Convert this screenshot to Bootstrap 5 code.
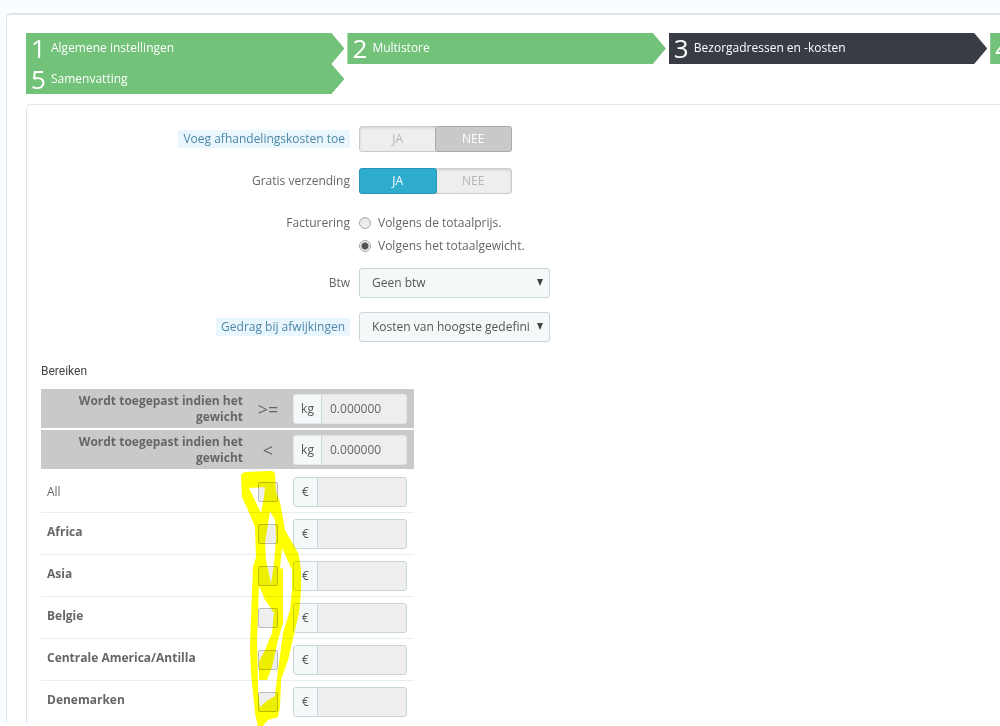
<!DOCTYPE html>
<html lang="nl">
<head>
<meta charset="utf-8">
<meta name="viewport" content="width=device-width, initial-scale=1">
<title>Bezorgadressen en -kosten</title>
<link href="https://cdn.jsdelivr.net/npm/bootstrap@5.3.0/dist/css/bootstrap.min.css" rel="stylesheet">
<style>
body { background: #fff; color: #666; font: 12px/16px "Open Sans", sans-serif; min-height: 100vh; }
.page-area { background: #fafdff; padding: 13px 0 0 6px; }
.outer-panel { background: #fff; border: solid #dfe4ea; border-width: 2px 0 0 1px; border-top-left-radius: 5px; padding: 18px 0 0 19px; }
.inner-panel { border: solid #e0e3e8; border-width: 1px 0 0 1px; border-top-left-radius: 5px; padding: 21px 0 0 14px; margin-top: 10px; }

.steps { display: grid; grid-template-columns: repeat(4, 33%); grid-template-rows: 31px 30px; overflow: hidden; }
.step { color: #fff; background: #72c279; margin-right: 3px; padding: 0 5px; clip-path: polygon(0 0, calc(100% - 13px) 0, 100% 50%, calc(100% - 13px) 100%, 0 100%); text-decoration: none; line-height: 30px; }
.step:hover { color: #fff; }
.step.current { background: #3a3c45; }
.step-no { font-size: 26px; width: 20px; }

.form-line { display: grid; grid-template-columns: 309px 1fr; column-gap: 9px; }
.snug { margin-bottom: 14px; }
.line-label { justify-self: end; line-height: 18px; }
.hinted { background: #eaf6fd; color: #4d87a8; padding: 0 5px; }
.toggle-pair { width: 153px; height: 26px; background: #eee; border: 1px solid #ccc; border-radius: 3px; box-shadow: inset 0 1px 3px rgba(0,0,0,.12); }
.toggle-pair label { flex: 1; text-align: center; line-height: 24px; color: #b5b5b5; margin: -1px; border: 1px solid transparent; border-radius: 3px; }
.toggle-pair .btn-check:checked + .on { background: #2eacce; border-color: #2596b5; color: #fff; }
.toggle-pair .btn-check:checked + .off { background: #c9c9c9; border-color: #aaa; color: #fff; }
.radio-stack { display: grid; row-gap: 7px; padding-top: 1px; }
.radio-line { display: flex; align-items: center; column-gap: 7px; }
.dot { appearance: none; width: 12px; height: 12px; border: 1px solid #aaa; border-radius: 50%; background: linear-gradient(#e4e4e4, #f2f2f2); margin: 0; }
.dot:checked { background: radial-gradient(circle, #555 0 3px, #eee 4px); }
.picker { width: 191px; height: 30px; padding: 0 20px 0 12px; font-size: 12px; line-height: 28px; color: #555; border: 1px solid #c7d6db; border-radius: 3px; background-color: #f5f8f9;
  background-image: url("data:image/svg+xml,%3Csvg xmlns='http://www.w3.org/2000/svg' viewBox='0 0 6 7'%3E%3Cpath d='M0 0h6L3 7z' fill='%23444'/%3E%3C/svg%3E"); background-size: 6px 7px; background-position: right 6px top 10px; text-overflow: clip; }

.ranges { position: relative; padding-top: 20px; }
.range-title { font: 12px/19px Roboto, sans-serif; color: #444; }
.range-table { width: 373px; table-layout: fixed; border-collapse: separate; border-spacing: 0; margin-bottom: -3px; }
.range-table td, .range-table th { height: 42px; padding: 0 6px; vertical-align: middle; border-bottom: 1px solid #eaeded; }
.range-table thead th { height: 41px; background: #c9c9c9; border-bottom: 2px solid #fff; }
.range-table tbody tr:last-child td { border-bottom-color: transparent; }
.range-table .zone { font-weight: 700; padding-bottom: 4px; }
.range-table .sign { font-size: 18px; font-weight: 400; }
.amount { width: 114px; height: 30px; border: 1px solid #c7d6db; border-radius: 3px; overflow: hidden; background: #eee; }
.amount label { background: #f5f8f9; border-right: 1px solid #c7d6db; color: #555; width: 24px; line-height: 28px; font-weight: 400; }
.amount .unit { width: 28px; }
.amount input { min-width: 0; border: 0; background: #eee; color: #666; padding: 0 8px; }
thead .amount { border-color: #e3e6e8; }
.tick { appearance: none; display: block; width: 20px; height: 20px; margin: 0 auto; border: 1px solid #bbb; border-radius: 2px; background: #eee; }
.marker { position: absolute; left: 199px; top: 127px; mix-blend-mode: multiply; pointer-events: none; }
</style>
</head>
<body>
<main class="page-area">
  <div class="outer-panel">
    <nav class="steps" aria-label="Stappen">
      <a class="step d-flex" href="#"><span class="step-no">1</span><span>Algemene instellingen</span></a>
      <a class="step d-flex" href="#"><span class="step-no">2</span><span>Multistore</span></a>
      <a class="step current d-flex" href="#" aria-current="step"><span class="step-no">3</span><span>Bezorgadressen en -kosten</span></a>
      <a class="step d-flex" href="#"><span class="step-no">4</span></a>
      <a class="step d-flex" href="#"><span class="step-no">5</span><span>Samenvatting</span></a>
    </nav>
    <form class="inner-panel">
      <div class="form-line align-items-center mb-3">
        <span class="line-label hinted" id="l1">Voeg afhandelingskosten toe</span>
        <div class="toggle-pair d-flex" role="radiogroup" aria-labelledby="l1">
          <input class="btn-check" type="radio" name="handling" id="h1"><label class="on" for="h1">JA</label>
          <input class="btn-check" type="radio" name="handling" id="h0" checked><label class="off" for="h0">NEE</label>
        </div>
      </div>
      <div class="form-line align-items-center mb-3">
        <span class="line-label" id="l2">Gratis verzending</span>
        <div class="toggle-pair d-flex" role="radiogroup" aria-labelledby="l2">
          <input class="btn-check" type="radio" name="free" id="f1" checked><label class="on" for="f1">JA</label>
          <input class="btn-check" type="radio" name="free" id="f0"><label class="off" for="f0">NEE</label>
        </div>
      </div>
      <div class="form-line snug pt-1">
        <span class="line-label" id="l3">Facturering</span>
        <div class="radio-stack" role="radiogroup" aria-labelledby="l3">
          <div class="radio-line"><input class="dot" type="radio" name="bill" id="b1"><label for="b1">Volgens de totaalprijs.</label></div>
          <div class="radio-line"><input class="dot" type="radio" name="bill" id="b2" checked><label for="b2">Volgens het totaalgewicht.</label></div>
        </div>
      </div>
      <div class="form-line snug align-items-center">
        <label class="line-label" for="tax">Btw</label>
        <select class="form-select picker" id="tax"><option>Geen btw</option></select>
      </div>
      <div class="form-line align-items-center">
        <label class="line-label hinted" for="oor">Gedrag bij afwijkingen</label>
        <select class="form-select picker" id="oor"><option>Kosten van hoogste gedefinieerde bereik</option></select>
      </div>
      <div class="ranges">
        <h2 class="range-title mb-2">Bereiken</h2>
        <table class="range-table">
          <colgroup><col style="width:208px"><col style="width:38px"><col></colgroup>
          <thead>
            <tr><th class="text-end">Wordt toegepast indien het gewicht</th><th class="sign text-center px-0">&gt;=</th><th><div class="amount d-flex"><label class="unit text-center flex-shrink-0" for="w1">kg</label><input id="w1" type="text" value="0.000000"></div></th></tr>
            <tr><th class="text-end">Wordt toegepast indien het gewicht</th><th class="sign text-center px-0">&lt;</th><th><div class="amount d-flex"><label class="unit text-center flex-shrink-0" for="w2">kg</label><input id="w2" type="text" value="0.000000"></div></th></tr>
          </thead>
          <tbody>
            <tr><td><label for="c0">All</label></td><td><input class="tick" type="checkbox" id="c0"></td><td><div class="amount d-flex"><label class="text-center flex-shrink-0" for="p0">€</label><input id="p0" type="text" disabled></div></td></tr>
            <tr><td class="zone"><label for="c1">Africa</label></td><td><input class="tick" type="checkbox" id="c1"></td><td><div class="amount d-flex"><label class="text-center flex-shrink-0" for="p1">€</label><input id="p1" type="text" disabled></div></td></tr>
            <tr><td class="zone"><label for="c2">Asia</label></td><td><input class="tick" type="checkbox" id="c2"></td><td><div class="amount d-flex"><label class="text-center flex-shrink-0" for="p2">€</label><input id="p2" type="text" disabled></div></td></tr>
            <tr><td class="zone"><label for="c3">Belgie</label></td><td><input class="tick" type="checkbox" id="c3"></td><td><div class="amount d-flex"><label class="text-center flex-shrink-0" for="p3">€</label><input id="p3" type="text" disabled></div></td></tr>
            <tr><td class="zone"><label for="c4">Centrale America/Antilla</label></td><td><input class="tick" type="checkbox" id="c4"></td><td><div class="amount d-flex"><label class="text-center flex-shrink-0" for="p4">€</label><input id="p4" type="text" disabled></div></td></tr>
            <tr><td class="zone"><label for="c5">Denemarken</label></td><td><input class="tick" type="checkbox" id="c5"></td><td><div class="amount d-flex"><label class="text-center flex-shrink-0" for="p5">€</label><input id="p5" type="text" disabled></div></td></tr>
          </tbody>
        </table>
        <!-- highlighter stroke over the tick boxes -->
        <svg class="marker" width="64" height="257" viewBox="240 469 64 257" aria-hidden="true">
          <path fill="#ff0" fill-rule="evenodd" d="M241 477Q241 472 247 472L268 471Q274 470 275 474L276 492L280 502L285 530L298 553Q302 565 301 590L299 613L295 630L288 660L281 680L280 707L278 717L268 720L262 727H258L255 713L251 673L250 647L252 590L253 567L256 557L255 527L248 510L242 497ZM249 488L265 487L264 497L261 513ZM270 511L265 543L266 560L271 584L274 563L276 538L275 520ZM282 548L292 570V590L290 610L283 633L278 670L275 696Q267 700 260 707L258 690L257 640L259 586L265 600L274 613L272 633L265 650L259 662V680H267L272 667L278 640L283 623V569L280 568Z"/>
        </svg>
      </div>
    </form>
  </div>
</main>
<script src="https://cdn.jsdelivr.net/npm/bootstrap@5.3.0/dist/js/bootstrap.bundle.min.js"></script>
</body>
</html>
